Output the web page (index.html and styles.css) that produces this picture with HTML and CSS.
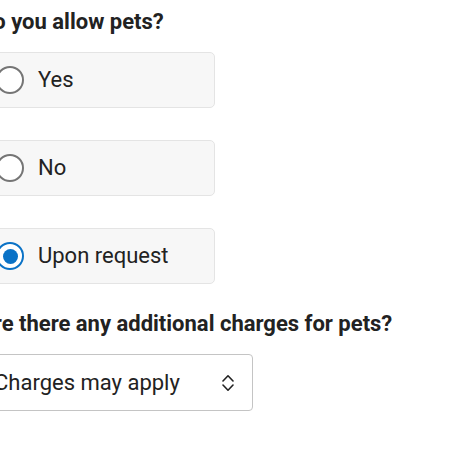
FILE: index.html
```html
<!DOCTYPE html>
<html lang="en">
<head>
<meta charset="utf-8">
<link rel="stylesheet" href="styles.css">
</head>
<body>
<form class="form">
  <fieldset class="group">
    <legend class="question">Do you allow pets?</legend>
    <div class="options">
      <label class="option"><span class="radio"></span><span class="label">Yes</span></label>
      <label class="option"><span class="radio"></span><span class="label">No</span></label>
      <label class="option"><span class="radio checked"></span><span class="label">Upon request</span></label>
    </div>
  </fieldset>
  <div class="group second">
    <div class="question">Are there any additional charges for pets?</div>
    <div class="select">
      <span class="value">Charges may apply</span>
      <svg class="chev" width="12" height="18" viewBox="0 0 12 18" fill="none" stroke="#222" stroke-width="1.6" stroke-linecap="round" stroke-linejoin="round"><path d="M1 7 6 1.8 11 7"/><path d="M1 11 6 16.2 11 11"/></svg>
    </div>
  </div>
</form>
</body>
</html>
```
FILE: styles.css
```css
html, body {
  margin: 0;
  padding: 0;
  background: #fff;
}
body {
  font-family: Roboto, "Liberation Sans", sans-serif;
  color: #222;
  overflow: hidden;
}
.form {
  margin-left: -21px;
  padding-top: 9px;
}
.group {
  border: 0;
  margin: 0;
  padding: 0;
}
.question {
  font-size: 22px;
  font-weight: 700;
  line-height: 26px;
  padding: 0;
  margin: 0 0 17px 0;
  white-space: nowrap;
}
.options {
  display: flex;
  flex-direction: column;
  gap: 32px;
}
.option {
  display: flex;
  align-items: center;
  gap: 14px;
  box-sizing: border-box;
  width: 236px;
  height: 56px;
  padding-left: 16px;
  background: #f7f7f7;
  border: 1px solid #e4e4e4;
  border-radius: 5px;
}
.radio {
  box-sizing: border-box;
  width: 28px;
  height: 28px;
  border-radius: 50%;
  border: 2.5px solid #757575;
  background: #fff;
  display: flex;
  align-items: center;
  justify-content: center;
  flex: none;
}
.radio.checked {
  border-color: #0a72c6;
}
.radio.checked::after {
  content: "";
  width: 15px;
  height: 15px;
  border-radius: 50%;
  background: #0a72c6;
}
.label {
  font-size: 22px;
  line-height: 26px;
}
.second {
  margin-top: 27px;
}
.select {
  box-sizing: border-box;
  width: 274px;
  height: 57px;
  display: flex;
  align-items: center;
  justify-content: space-between;
  padding: 0 18px 0 14px;
  border: 1px solid #c4c4c4;
  border-radius: 4px;
  background: #fff;
}
.value {
  font-size: 22px;
  line-height: 26px;
}
.chev {
  display: block;
}
```
